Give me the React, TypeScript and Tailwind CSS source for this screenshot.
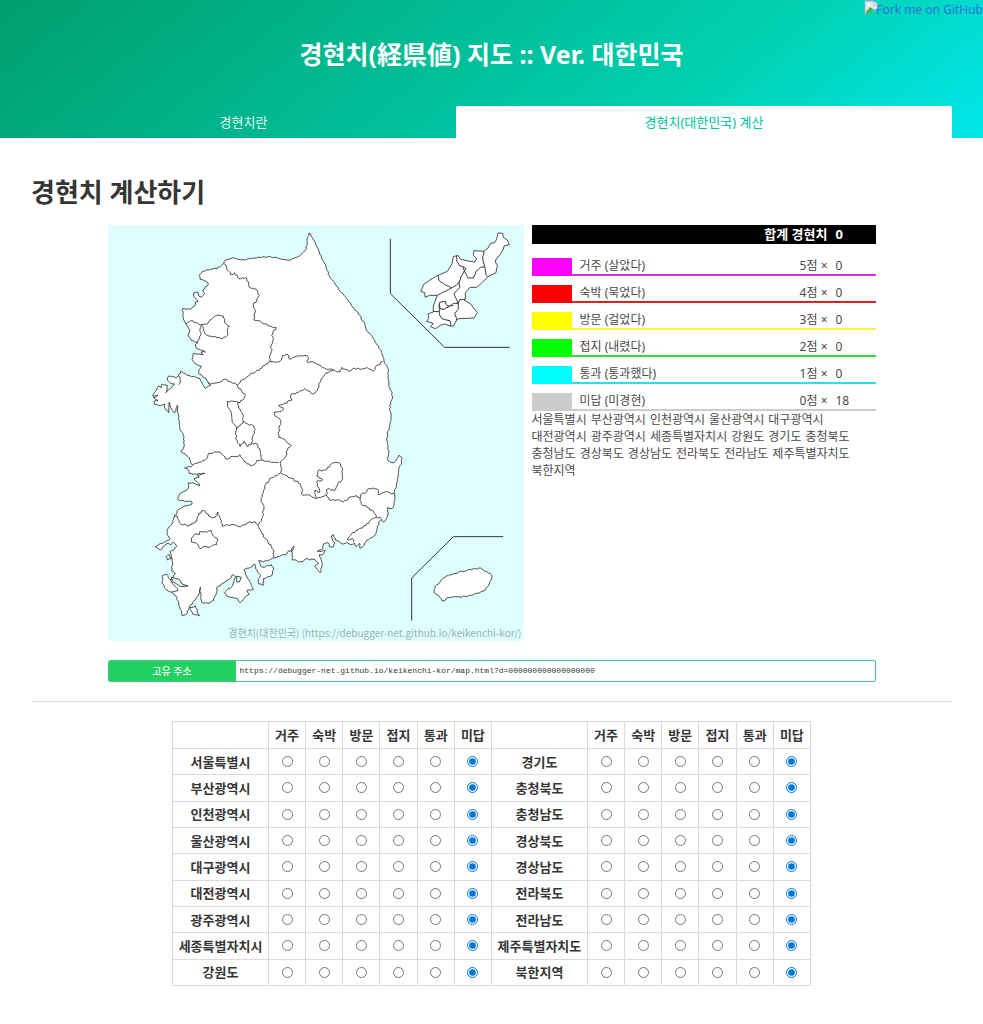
import React, { useState } from 'react';

interface Level {
  name: string;
  detail: string;
  point: number;
  swatch: string;
  border: string;
}

const LEVELS: Level[] = [
  { name: '거주', detail: '살았다', point: 5, swatch: 'bg-[#ff00ff]', border: 'border-[#d232d2]' },
  { name: '숙박', detail: '묵었다', point: 4, swatch: 'bg-[#ff0000]', border: 'border-[#dc2323]' },
  { name: '방문', detail: '걸었다', point: 3, swatch: 'bg-[#ffff00]', border: 'border-[#faf532]' },
  { name: '접지', detail: '내렸다', point: 2, swatch: 'bg-[#00ff00]', border: 'border-[#32dc3c]' },
  { name: '통과', detail: '통과했다', point: 1, swatch: 'bg-[#00ffff]', border: 'border-[#28e1e6]' },
  { name: '미답', detail: '미경현', point: 0, swatch: 'bg-[#cccccc]', border: 'border-[#cccccc]' },
];

const REGIONS = [
  '서울특별시', '부산광역시', '인천광역시', '울산광역시', '대구광역시', '대전광역시',
  '광주광역시', '세종특별자치시', '강원도', '경기도', '충청북도', '충청남도',
  '경상북도', '경상남도', '전라북도', '전라남도', '제주특별자치도', '북한지역',
];

const HALF = REGIONS.length / 2;

// Outlines are lists of "x,y" points
const MAINLAND =
  '603,27 608,30 614,44 622,56 632,80 642,104 652,122 658,140 664,156 676,172 690,192 700,206 712,218 722,232 734,248 746,262 756,274 762,290 770,298 774,316 784,328 796,344 808,364 820,380 824,396 828,412 836,424 841,436 840,460 842,486 850,502 854,522 848,540 844,556 849,574 848,592 843,612 838,630 837,650 842,690 838,704 846,714 858,716 866,706 872,694 882,704 881,716 874,730 870,760 866,780 858,806 860,830 856,850 846,854 838,850 840,866 835,884 828,894 820,886 814,892 808,912 801,933 786,943 774,953 764,968 756,973 754,958 744,968 740,958 728,962 718,956 702,960 692,952 682,948 676,932 670,936 672,944 680,956 676,968 664,968 660,956 646,960 644,974 628,982 652,980 644,992 634,992 640,1008 642,1028 636,1046 628,1036 620,1026 632,1018 618,1006 606,1008 596,1004 586,1012 572,1014 564,1008 554,1008 550,978 558,966 552,982 540,982 536,990 526,992 510,998 498,1002 484,1008 466,1014 452,1010 458,1026 470,1030 490,1022 496,1030 492,1054 476,1060 466,1064 466,1084 452,1080 450,1070 458,1054 448,1044 440,1020 424,1032 408,1038 412,1050 418,1062 428,1076 436,1096 416,1100 424,1110 412,1118 398,1136 384,1122 356,1116 350,1108 360,1094 372,1088 384,1060 376,1052 360,1068 340,1080 326,1092 326,1106 316,1130 300,1138 282,1136 278,1120 277,1090 272,1112 258,1130 244,1148 238,1168 222,1174 216,1150 210,1130 204,1116 190,1104 182,1094 196,1082 188,1070 202,1050 190,1040 194,1020 190,994 186,982 196,980 206,968 196,954 188,962 180,958 174,960 158,978 142,968 158,958 182,950 186,944 176,930 180,914 192,900 198,880 204,872 212,856 226,848 252,840 252,834 220,830 208,824 214,812 240,794 242,776 258,778 276,784 262,770 258,764 274,760 268,754 290,748 262,750 244,748 240,736 230,732 250,728 254,724 244,702 232,690 218,682 228,668 226,634 216,616 214,590 210,566 208,544 204,562 198,566 188,550 184,534 182,566 172,556 170,540 158,545 140,542 138,532 150,530 136,520 150,514 134,516 146,498 152,486 160,492 162,480 178,484 174,506 192,490 200,480 188,478 178,468 182,456 204,462 212,456 218,442 240,454 268,462 276,464 292,494 308,484 300,474 288,460 272,448 274,436 280,426 262,420 252,406 256,388 286,392 280,384 292,384 264,372 262,362 270,356 250,350 240,336 246,318 234,300 226,280 224,254 246,256 260,246 262,234 270,232 262,222 256,208 270,204 272,216 280,220 290,208 284,198 298,186 300,176 276,166 274,154 284,142 308,136 328,134 348,118 352,108 380,102 400,108 440,102 486,98 516,104 548,108 574,96 594,76 599,40';

const BORDERS = [
  // Gangwon
  '348,118 356,136 368,152 380,146 392,164 414,160 424,190 448,200 454,214 446,230 436,242 442,264 438,288 460,294 490,308 504,310 494,330 492,360 486,404 486,412',
  '486,412 500,414 520,408 524,394 540,392 546,406 572,396 590,394 602,400 596,412 606,414 630,422 650,432 676,438 696,444 702,430 722,442 738,432 756,436 776,430 796,442 802,430 824,412',
  // Gyeonggi
  '486,412 470,424 456,434 440,446 428,448 410,466 398,470 388,484 370,474 350,466 330,476 308,480 300,474',
  '234,300 254,290 272,300 280,304 276,322 278,334 266,356',
  // Chungcheong
  '388,484 400,500 412,514 408,524 390,536',
  '386,610 384,640 396,668 408,652 420,668 430,656 434,638 442,616 436,606 420,600 406,592',
  '430,656 448,660 456,680 464,708',
  '254,724 280,714 296,704 302,688 320,684 340,688 352,704 380,698 396,692 408,712 428,726 444,716 446,710 464,708 490,716 512,714',
  '676,438 650,452 632,480 628,498 616,510 606,502 590,494 570,506 550,510 552,528 530,538 512,544 526,552 520,562 498,566 508,580 518,590 514,606 512,640 530,646 536,654 550,664 540,672 534,696 516,714',
  // Gyeongsang
  '516,714 522,734 516,748 490,762 470,786 466,800 458,832 468,850 464,880 452,902',
  '518,748 540,760 570,772 584,796 580,810 606,814 626,824 642,818 654,812 664,828 686,828 706,834 732,818 744,814 756,824',
  '656,812 656,796 664,794 680,800 690,780 704,764 704,736 694,716 670,720 652,738 630,740 626,756 644,768 628,770 630,790 636,804 620,800 626,822',
  '756,824 758,812 776,804 778,796 796,792 812,800 812,812 830,804 846,806 860,812',
  '756,824 760,840 784,852 806,878 820,884',
  '806,880 788,888 774,904 750,918 730,930 718,946 734,944 736,954',
  // Jeolla
  '198,880 208,876 214,896 240,908 266,892 272,868 288,860 312,882 324,878 330,864 336,880 342,906 372,902 398,908 424,894 440,892 452,906',
  '452,906 462,930 480,954 496,978 496,1000',
  '212,456 216,466 212,482',
];

const AREAS = [
  // Seoul, Sejong, Gwangju
  '280,302 298,300 306,288 326,274 346,276 350,296 364,306 358,322 360,332 344,344 322,338 302,336 290,328 286,314',
  '358,532 390,534 392,552 404,570 406,596 386,612 372,594 370,566 358,548',
  '250,942 260,930 274,932 276,922 298,924 310,920 316,936 328,944 326,962 314,964 306,970 288,966 276,974 268,960 250,954',
  // southern islands
  '164,1054 176,1050 188,1068 210,1100 192,1104 176,1098 164,1080',
  '246,1150 262,1146 274,1176 254,1170',
  '174,998 184,992 190,1004 178,1008',
  // Jeju
  '978,1098 982,1086 996,1074 1006,1062 1026,1052 1050,1046 1086,1036 1118,1032 1132,1042 1146,1048 1152,1060 1144,1080 1130,1100 1106,1108 1076,1118 1046,1118 1016,1122 1010,1130 1002,1130 992,1114 980,1108',
];

const WATERS = [
  '190,1060 214,1066 222,1080 240,1086 218,1088 206,1080 194,1072',
  '386,1056 400,1060 394,1074 386,1074',
];

const NORTH =
  '1170,27 1184,28 1186,40 1198,48 1204,62 1188,66 1186,76 1176,92 1164,106 1162,114 1168,124 1164,146 1140,158 1122,176 1106,190 1086,190 1072,206 1072,222 1068,228 1088,240 1100,256 1108,266 1098,282 1052,284 1046,288 1036,306 1026,306 1010,300 998,304 982,314 968,308 976,298 956,292 962,284 960,270 976,264 976,246 988,214 964,214 952,220 950,206 938,202 944,190 946,182 966,168 990,154 1018,142 1032,120 1036,98 1050,94 1058,106 1086,112 1100,114 1106,104 1096,94 1098,80 1128,82 1140,72 1148,58 1160,56 1166,46';

const NORTH_BORDERS = [
  '990,154 994,170 1010,182 1030,192 1046,182 1056,174',
  '1046,96 1046,112 1056,126 1066,128 1074,134 1066,146 1058,162 1052,176 1056,190 1046,200 1038,210 1046,226 1050,240',
  '1066,130 1070,142 1080,162 1096,162 1106,140 1118,130 1130,128',
  '1128,82 1124,100 1130,128 1134,152 1140,158',
  '988,214 1006,204 1030,192',
  '1072,226 1056,226 1050,238 1036,238 1020,250 1008,256 996,254 994,236 1012,232 1018,246 1036,244',
  '976,262 994,262 996,276 1002,284 1026,290 1028,306',
  '994,262 994,240',
  '1050,238 1052,254 1040,268 1046,288',
];

// Breaks long segments into short ones and nudges each joint sideways,
// so that coasts and borders look ragged.
const roughen = (source: string, closed = false, amount = 3): string => {
  const points = source.split(' ').map((p) => p.split(',').map(Number));
  if (closed) points.push(points[0]);
  const out: string[] = [];
  points.forEach(([x, y], i) => {
    out.push(`${x},${y}`);
    const next = points[i + 1];
    if (!next) return;
    const dx = next[0] - x;
    const dy = next[1] - y;
    const length = Math.hypot(dx, dy);
    const steps = Math.floor(length / 5);
    for (let s = 1; s < steps; s++) {
      const wave = Math.sin(x * 12.9 + y * 78.2 + s * 37.7) * 43758.5;
      const shift = ((wave - Math.floor(wave)) * 2 - 1) * amount;
      const t = s / steps;
      out.push(
        `${(x + dx * t - (dy / length) * shift).toFixed(1)},${(y + dy * t + (dx / length) * shift).toFixed(1)}`
      );
    }
  });
  return out.join(' ');
};

const KoreaMap: React.FC = () => (
  <div className="relative w-[416px] shrink-0 bg-[#dfffff]">
    <svg
      viewBox="0 3 1248 1248"
      className="block w-full"
      role="img"
      aria-label="대한민국 지도"
      stroke="#333"
      strokeWidth={2.6}
      strokeLinejoin="round"
    >
      <g fill="#fff">
        <polygon points={roughen(MAINLAND, true, 2)} />
        <polygon points={NORTH} />
        {AREAS.map((area) => (
          <polygon key={area} points={roughen(area, true, 2)} />
        ))}
      </g>
      <g fill="#dfffff">
        {WATERS.map((water) => (
          <polygon key={water} points={water} />
        ))}
      </g>
      <g fill="none">
        {BORDERS.map((border) => (
          <polyline key={border} points={roughen(border)} />
        ))}
        <g strokeWidth={3}>
          {NORTH_BORDERS.map((border) => (
            <polyline key={border} points={roughen(border, false, 1)} />
          ))}
        </g>
        <g strokeWidth={3}>
          <polyline points="847,45 847,209 1010,370 1205,370" />
          <polyline points="911,1190 911,1062 1036,938 1186,938" />
        </g>
      </g>
    </svg>
    <p className="absolute right-0.5 bottom-0 font-['Noto_Sans_CJK_KR',sans-serif] text-[10px] leading-4 whitespace-nowrap text-[#9aaeae]">
      경현치(대한민국) (https://debugger-net.github.io/keikenchi-kor/)
    </p>
  </div>
);

const ForkLink: React.FC = () => (
  <a
    href="https://github.com/debugger-net/keikenchi-kor"
    className="absolute top-0 right-0 flex text-xs leading-5 whitespace-nowrap text-[#3273dc]"
  >
    <svg viewBox="0 0 16 16" className="-mr-1 size-4" aria-hidden="true">
      <path d="M1 1h9l4 4v3l-3 2-3-1-3 4-4 1z" fill="#dce8f8" stroke="#a9b4c0" />
      <path d="M10 1v4h4" fill="#fff" stroke="#a9b4c0" />
      <path d="M2 12l4-5 3 2-3 4-4 1z" fill="#4fae3c" />
      <circle cx="5" cy="4.500" r="1.500" fill="#fff" />
    </svg>
    Fork me on GitHub
  </a>
);

interface SummaryProps {
  answers: number[];
}

const Summary: React.FC<SummaryProps> = ({ answers }) => {
  const total = answers.reduce((sum, level) => sum + LEVELS[level].point, 0);
  const untouched = REGIONS.filter((_, i) => answers[i] === 5);

  return (
    <div className="min-w-0 flex-1 text-xs">
      <div className="flex h-[19px] items-center justify-end gap-2 bg-black text-[13px] leading-[19px] font-bold text-white">
        <span>합계 경현치</span>
        <span className="w-10">{total}</span>
      </div>
      <ul className="mt-3.5 flex flex-col gap-[9px]">
        {LEVELS.map((level, i) => (
          <li key={level.name} className={`flex h-[18px] gap-2 border-b-2 leading-4 ${level.border}`}>
            <span className={`h-[18px] w-10 ${level.swatch}`} />
            <span className="flex-1">
              {level.name} ({level.detail})
            </span>
            <span>{level.point}점 ×</span>
            <span className="w-10">{answers.filter((a) => a === i).length}</span>
          </li>
        ))}
      </ul>
      <ul className="flex flex-wrap gap-x-1 leading-[17px]">
        {untouched.map((region) => (
          <li key={region}>{region}</li>
        ))}
      </ul>
    </div>
  );
};

interface RegionCellsProps {
  index: number;
  value: number;
  onChange: (index: number, level: number) => void;
}

const RegionCells: React.FC<RegionCellsProps> = ({ index, value, onChange }) => (
  <>
    <th scope="row" className="border border-[#dbdbdb] p-0 whitespace-nowrap">
      {REGIONS[index]}
    </th>
    {LEVELS.map((level, i) => (
      <td key={level.name} className="border border-[#dbdbdb] p-0">
        <input
          type="radio"
          name={`region-${index}`}
          aria-label={`${REGIONS[index]} ${level.name}`}
          checked={value === i}
          onChange={() => onChange(index, i)}
          className="mx-auto block size-[11px] accent-[#0075dc]"
        />
      </td>
    ))}
  </>
);

const HeadCells: React.FC = () => (
  <>
    <td className="h-[27px] w-24 border border-[#dbdbdb] p-0" />
    {LEVELS.map((level) => (
      <th key={level.name} scope="col" className="border border-[#dbdbdb] p-0">
        {level.name}
      </th>
    ))}
  </>
);

const App: React.FC = () => {
  const [answers, setAnswers] = useState<number[]>(() => REGIONS.map(() => 5));

  const handleChange = (index: number, level: number) => {
    setAnswers((prev) => prev.map((a, i) => (i === index ? level : a)));
  };

  const address = `https://debugger-net.github.io/keikenchi-kor/map.html?d=${answers
    .map((a) => LEVELS[a].point)
    .join('')}`;

  return (
    <div className="bg-white font-['Noto_Sans','Noto_Sans_CJK_KR',sans-serif] text-[#4a4a4a]">
      <header className="relative bg-[linear-gradient(141deg,#009e6c_0%,#00d1b2_71%,#00e7eb_100%)] px-[31px] text-white">
        <ForkLink />
        <h1 className="pt-9 pb-[34px] text-center text-[25px] leading-9 font-bold">
          경현치(経県値) 지도 :: Ver. 대한민국
        </h1>
        <nav className="flex text-[13px] leading-8">
          <a href="#about" className="flex-auto text-center opacity-90">
            경현치란
          </a>
          <a href="#map" className="flex-auto rounded-t-xs bg-white text-center text-[#00c3a0]">
            경현치(대한민국) 계산
          </a>
        </nav>
      </header>

      <main className="px-[31px] pt-9 pb-9">
        <h2 className="text-[26px] leading-9 font-bold text-[#363636]">경현치 계산하기</h2>

        <div className="mx-auto mt-[15px] max-w-3xl">
          <div className="flex gap-2">
            <KoreaMap />
            <Summary answers={answers} />
          </div>
          <div className="mt-[19px] flex h-[22px] overflow-hidden rounded-xs border border-[#48c78e]">
            <label
              htmlFor="address"
              className="w-[127px] bg-[#23d160] text-center text-[10px] leading-5 font-medium text-white"
            >
              고유 주소
            </label>
            <input
              id="address"
              type="text"
              readOnly
              value={address}
              className="min-w-0 flex-1 px-1 font-['Liberation_Mono',monospace] text-[8px] text-[#363636] outline-none"
            />
          </div>
        </div>

        <hr className="my-[19px] border-[#dbdbdb]" />

        <table className="mx-auto h-[265px] w-[639px] table-fixed border-collapse text-center text-[13px] leading-5 text-[#363636]">
          <thead>
            <tr>
              <HeadCells />
              <HeadCells />
            </tr>
          </thead>
          <tbody>
            {REGIONS.slice(0, HALF).map((region, i) => (
              <tr key={region}>
                <RegionCells index={i} value={answers[i]} onChange={handleChange} />
                <RegionCells index={i + HALF} value={answers[i + HALF]} onChange={handleChange} />
              </tr>
            ))}
          </tbody>
        </table>
      </main>
    </div>
  );
};

export default App;
